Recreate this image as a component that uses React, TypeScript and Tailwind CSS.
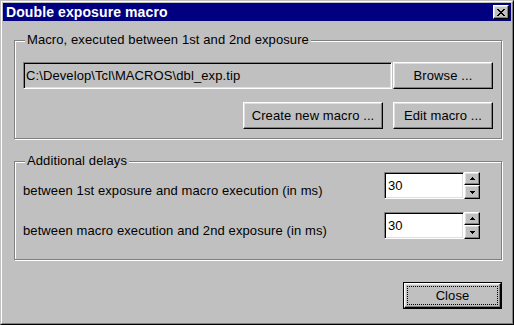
import React from "react";

const raised =
  "border border-t-white border-l-white border-r-black border-b-black shadow-[inset_-1px_-1px_0_#808080,inset_1px_1px_0_#dfdfdf] bg-[#c0c0c0]";
const sunken =
  "border border-t-[#808080] border-l-[#808080] border-r-white border-b-white shadow-[inset_1px_1px_0_#000,inset_-1px_-1px_0_#dfdfdf]";

function Btn({ label, w }: { label: string; w: string }) {
  return (
    <div className={`${raised} ${w} h-[27px] flex items-center justify-center text-[13px] tracking-[0.1px] text-black`}>
      {label}
    </div>
  );
}

function CloseX() {
  const rows = [
    [0, 1, 6, 7],
    [1, 2, 5, 6],
    [2, 3, 4, 5],
    [3, 4],
    [2, 3, 4, 5],
    [1, 2, 5, 6],
    [0, 1, 6, 7],
  ];
  return (
    <svg width="8" height="7" viewBox="0 0 8 7" shapeRendering="crispEdges">
      {rows.map((r, y) => r.map((x) => <rect key={`${x}-${y}`} x={x} y={y} width="1" height="1" fill="#000" />))}
    </svg>
  );
}

function Arrow({ up }: { up: boolean }) {
  return (
    <svg width="5" height="3" viewBox="0 0 5 3" shapeRendering="crispEdges">
      {up ? (
        <>
          <rect x="2" y="0" width="1" height="1" fill="#000" />
          <rect x="1" y="1" width="3" height="1" fill="#000" />
          <rect x="0" y="2" width="5" height="1" fill="#000" />
        </>
      ) : (
        <>
          <rect x="0" y="0" width="5" height="1" fill="#000" />
          <rect x="1" y="1" width="3" height="1" fill="#000" />
          <rect x="2" y="2" width="1" height="1" fill="#000" />
        </>
      )}
    </svg>
  );
}

function Spin({ value }: { value: string }) {
  return (
    <div className="flex h-[27px]">
      <div className={`${sunken} bg-white w-[80px] h-[27px] flex items-center pl-[3px] text-[13px] text-black`}>{value}</div>
      <div className="flex flex-col w-[16px]">
        <div className={`${raised} h-[13px] flex items-center justify-center`}>
          <Arrow up />
        </div>
        <div className={`${raised} h-[14px] flex items-center justify-center`}>
          <Arrow up={false} />
        </div>
      </div>
    </div>
  );
}

function Group({ title, children, className }: { title: string; children: React.ReactNode; className: string }) {
  return (
    <div
      className={`relative w-[488px] h-[99px] border border-[#808080] shadow-[inset_1px_1px_0_#fff,1px_1px_0_#fff] ${className}`}
    >
      <div className="absolute left-[10px] top-[-9px] px-[2px] bg-[#c0c0c0] text-[13px] leading-[15px] tracking-[0.1px] text-black">
        {title}
      </div>
      {children}
    </div>
  );
}

export default function App() {
  return (
    <div className="w-[514px] h-[325px] bg-[#c0c0c0] border border-t-[#c0c0c0] border-l-[#c0c0c0] border-r-black border-b-black font-['Liberation_Sans',Arial,sans-serif]">
      <div className="h-full border border-t-white border-l-white border-r-[#808080] border-b-[#808080] p-px flex flex-col">
        <div className="h-[18px] bg-[#000080] flex items-center justify-between pl-[3px] pr-[2px]">
          <span className="text-white font-bold text-[14px] leading-[18px] tracking-[0.1px]">Double exposure macro</span>
          <div className={`${raised} w-[16px] h-[14px] flex items-center justify-center`}>
            <CloseX />
          </div>
        </div>
        <div className="flex flex-col pl-[11px]">
          <Group title="Macro, executed between 1st and 2nd exposure" className="mt-[19px] pt-[21px] px-[8px]">
            <div className="flex gap-[1px] h-[27px]">
              <div className={`${sunken} flex-1 h-[27px] flex items-center pl-[2px] text-[13px] tracking-[0.1px] text-black`}>
                C:\Develop\Tcl\MACROS\dbl_exp.tip
              </div>
              <Btn label="Browse ..." w="w-[100px]" />
            </div>
            <div className="mt-[13px] flex justify-end gap-[10px]">
              <Btn label="Create new macro ..." w="w-[140px]" />
              <Btn label="Edit macro ..." w="w-[100px]" />
            </div>
          </Group>
          <Group title="Additional delays" className="mt-[22px] pt-[10px] pl-[8px] pr-[21px]">
            <div className="flex flex-col gap-[13px]">
              <div className="flex items-start justify-between">
                <span className="mt-[11px] leading-[15px] text-[13px] tracking-[0.1px] text-black">
                  between 1st exposure and macro execution (in ms)
                </span>
                <Spin value="30" />
              </div>
              <div className="flex items-start justify-between">
                <span className="mt-[11px] leading-[15px] text-[13px] tracking-[0.1px] text-black">
                  between macro execution and 2nd exposure (in ms)
                </span>
                <Spin value="30" />
              </div>
            </div>
          </Group>
          <div className="mt-[22px] w-[488px] flex justify-end">
            <div className="border border-black">
              <div className="w-[97px] h-[25px] border border-t-white border-l-white border-r-black border-b-black shadow-[inset_-1px_-1px_0_#808080,inset_1px_1px_0_#dfdfdf] flex items-stretch p-[2px]">
                <div className="flex-1 border border-dotted border-black flex items-center justify-center text-[13px] tracking-[0.1px] text-black">
                  Close
                </div>
              </div>
            </div>
          </div>
        </div>
      </div>
    </div>
  );
}
